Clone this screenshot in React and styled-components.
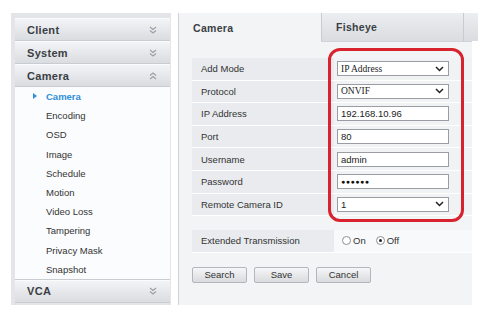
import React from "react";
import styled, { createGlobalStyle } from "styled-components";

const Global = createGlobalStyle`
  html, body { margin: 0; padding: 0; background: #ffffff; }
  body { font-family: "Liberation Sans", Arial, sans-serif; color: #333; }
`;

const Page = styled.div`
  display: flex;
  align-items: flex-start;
  gap: 7px;
  padding: 13px 0 0 11px;
  width: 491px;
  height: 329px;
  box-sizing: border-box;
`;

const Sidebar = styled.div`
  width: 160px;
  height: 292px;
  box-sizing: border-box;
  padding: 5px 1px 3px 4px;
  background: #e3e5e8;
  display: flex;
  flex-direction: column;
`;

const GroupHeader = styled.div`
  height: 23px;
  flex: none;
  display: flex;
  align-items: center;
  justify-content: space-between;
  padding: 0 13px 0 12px;
  background: linear-gradient(#f3f4f6, #d9dce0);
  border-top: 1px solid #fafbfc;
  border-bottom: 1px solid #c9cdd2;
  box-sizing: border-box;
  font-weight: bold;
  font-size: 11px;
  letter-spacing: 0.3px;
  color: #3a3f45;
`;

const SubList = styled.div`
  background: #fbfcfd;
  display: flex;
  flex-direction: column;
  border-bottom: 1px solid #c9cdd2;
`;

const SubItem = styled.div`
  height: 19.2px;
  display: flex;
  align-items: center;
  padding-left: 31px;
  font-size: 9.5px;
  color: ${(p) => (p.active ? "#2f8fd8" : "#333")};
  font-weight: ${(p) => (p.active ? "bold" : "normal")};
  position: relative;
  &::before {
    content: "";
    display: ${(p) => (p.active ? "block" : "none")};
    position: absolute;
    left: 18px;
    top: 6px;
    border-left: 4px solid #2f8fd8;
    border-top: 3px solid transparent;
    border-bottom: 3px solid transparent;
  }
`;

const Main = styled.div`
  width: 294px;
  height: 292px;
  background: #f3f4f6;
  border-left: 1px solid #cfd2d6;
  box-sizing: border-box;
  display: flex;
  flex-direction: column;
`;

const Tabs = styled.div`
  display: flex;
  height: 28px;
  flex: none;
  background: linear-gradient(#eef0f2, #dcdfe3);
  border-bottom: 1px solid #d0d3d8;
`;

const Tab = styled.div`
  width: ${(p) => p.w}px;
  flex: none;
  box-sizing: border-box;
  display: flex;
  align-items: center;
  padding-left: 14px;
  font-weight: bold;
  font-size: 10.5px;
  letter-spacing: 0.3px;
  color: #3a3f45;
  background: ${(p) => (p.active ? "#f3f4f6" : "linear-gradient(#eceef1, #d9dce0)")};
  border-left: ${(p) => (p.active ? "none" : "1px solid #c8ccd1")};
  margin-bottom: ${(p) => (p.active ? "-1px" : "0")};
`;

const Body = styled.div`
  padding: 16px 0 0 13px;
  display: flex;
  flex-direction: column;
  position: relative;
`;

const Table = styled.div`
  display: flex;
  flex-direction: column;
`;

const Row = styled.div`
  display: grid;
  grid-template-columns: 142px 1fr;
  height: 22.6px;
  border-bottom: 1px solid #ffffff;
  box-sizing: border-box;
`;

const Label = styled.div`
  background: #e9ebee;
  display: flex;
  align-items: center;
  padding-left: 9px;
  font-size: 9.5px;
  color: #333;
`;

const Value = styled.div`
  background: ${(p) => (p.light ? "#f8f9fa" : "#f1f2f4")};
  display: flex;
  align-items: center;
  padding-left: 3px;
  font-size: 9.5px;
`;

const Field = styled.div`
  width: 112px;
  height: 15px;
  box-sizing: border-box;
  border: 1px solid #9a9ea4;
  background: #ffffff;
  display: flex;
  align-items: center;
  justify-content: space-between;
  padding: 0 4px 0 3px;
  font-size: 9.5px;
  color: #222;
  font-family: ${(p) => (p.serif ? '"Liberation Serif", "Times New Roman", serif' : '"Liberation Sans", Arial, sans-serif')};
`;

const Dots = styled.span`
  font-size: 7px;
  letter-spacing: 0.5px;
  color: #111;
`;

const Highlight = styled.div`
  position: absolute;
  left: 149px;
  top: 6px;
  width: 136px;
  height: 174px;
  border: 3px solid #d8232f;
  border-radius: 12px;
  box-sizing: border-box;
  pointer-events: none;
`;

const Spacer = styled.div`
  height: 14px;
`;

const Radio = styled.label`
  display: inline-flex;
  align-items: center;
  gap: 2px;
  margin-left: 5px;
  margin-right: 5px;
  font-size: 9.5px;
  color: #333;
`;

const Circle = styled.span`
  width: 9px;
  height: 9px;
  border-radius: 50%;
  border: 1px solid #8c9096;
  background: #fff;
  box-sizing: border-box;
  display: flex;
  align-items: center;
  justify-content: center;
  &::after {
    content: "";
    display: ${(p) => (p.checked ? "block" : "none")};
    width: 3px;
    height: 3px;
    border-radius: 50%;
    background: #222;
  }
`;

const Buttons = styled.div`
  display: flex;
  gap: 7px;
  margin-top: 14px;
`;

const Button = styled.div`
  width: 55px;
  height: 16px;
  box-sizing: border-box;
  border: 1px solid #b3b6ba;
  border-radius: 2px;
  background: linear-gradient(#f6f6f7, #d9dbde);
  display: flex;
  align-items: center;
  justify-content: center;
  font-size: 9.5px;
  color: #333;
`;

const DoubleChevron = ({ up }) => (
  <svg width="8" height="8" viewBox="0 0 8 8" style={{ transform: up ? "rotate(180deg)" : "none" }}>
    <path d="M1 1 L4 3.5 L7 1 M1 4.5 L4 7 L7 4.5" fill="none" stroke="#9ba1a8" strokeWidth="1.2" />
  </svg>
);

const Caret = () => (
  <svg width="9" height="6" viewBox="0 0 9 6">
    <path d="M1 1 L4.5 4.5 L8 1" fill="none" stroke="#222" strokeWidth="1.5" />
  </svg>
);

const subItems = ["Camera", "Encoding", "OSD", "Image", "Schedule", "Motion", "Video Loss", "Tampering", "Privacy Mask", "Snapshot"];

const rows = [
  { label: "Add Mode", value: "IP Address", select: true, serif: true },
  { label: "Protocol", value: "ONVIF", select: true, serif: true },
  { label: "IP Address", value: "192.168.10.96" },
  { label: "Port", value: "80" },
  { label: "Username", value: "admin" },
  { label: "Password", password: true },
  { label: "Remote Camera ID", value: "1", select: true },
];

export default function App() {
  return (
    <>
      <Global />
      <Page>
        <Sidebar>
          <GroupHeader>Client<DoubleChevron /></GroupHeader>
          <GroupHeader>System<DoubleChevron /></GroupHeader>
          <GroupHeader>Camera<DoubleChevron up /></GroupHeader>
          <SubList>
            {subItems.map((s, i) => (
              <SubItem key={s} active={i === 0}>{s}</SubItem>
            ))}
          </SubList>
          <GroupHeader>VCA<DoubleChevron /></GroupHeader>
        </Sidebar>
        <Main>
          <Tabs>
            <Tab w={142} active>Camera</Tab>
            <Tab w={142}>Fisheye</Tab>
            <Tab w={10} />
          </Tabs>
          <Body>
            <Table>
              {rows.map((r) => (
                <Row key={r.label}>
                  <Label>{r.label}</Label>
                  <Value>
                    <Field serif={r.serif}>
                      {r.password ? <Dots>●●●●●●</Dots> : <span>{r.value}</span>}
                      {r.select && <Caret />}
                    </Field>
                  </Value>
                </Row>
              ))}
            </Table>
            <Highlight />
            <Spacer />
            <Row>
              <Label>Extended Transmission</Label>
              <Value light>
                <Radio><Circle />On</Radio>
                <Radio><Circle checked />Off</Radio>
              </Value>
            </Row>
            <Buttons>
              <Button>Search</Button>
              <Button>Save</Button>
              <Button>Cancel</Button>
            </Buttons>
          </Body>
        </Main>
      </Page>
    </>
  );
}
